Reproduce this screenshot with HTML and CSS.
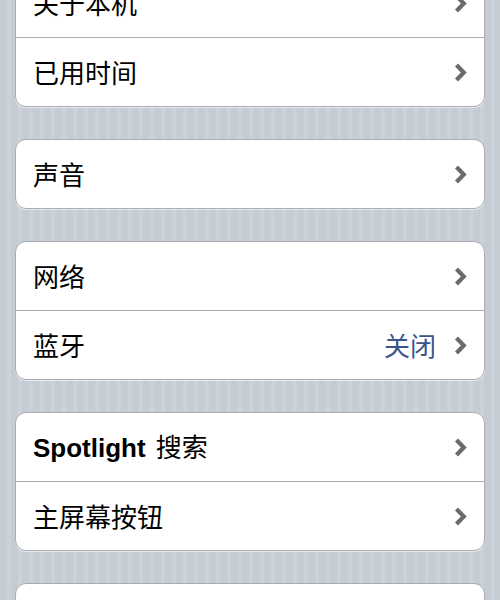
FILE: index.html
```html
<!DOCTYPE html>
<html lang="zh-CN">
<head>
<meta charset="utf-8">
<title>通用</title>
<link rel="stylesheet" href="styles.css">
</head>
<body>
<div class="table">
  <div class="group first">
    <div class="row"><span class="label">关于本机</span><span class="accessory"><svg class="chev" width="13" height="19" viewBox="0 0 13 19"><polyline points="2.5,2 9.8,9.5 2.5,17" /></svg></span></div>
    <div class="row"><span class="label">已用时间</span><span class="accessory"><svg class="chev" width="13" height="19" viewBox="0 0 13 19"><polyline points="2.5,2 9.8,9.5 2.5,17" /></svg></span></div>
  </div>
  <div class="group">
    <div class="row"><span class="label">声音</span><span class="accessory"><svg class="chev" width="13" height="19" viewBox="0 0 13 19"><polyline points="2.5,2 9.8,9.5 2.5,17" /></svg></span></div>
  </div>
  <div class="group">
    <div class="row"><span class="label">网络</span><span class="accessory"><svg class="chev" width="13" height="19" viewBox="0 0 13 19"><polyline points="2.5,2 9.8,9.5 2.5,17" /></svg></span></div>
    <div class="row"><span class="label">蓝牙</span><span class="accessory"><span class="detail">关闭</span><svg class="chev" width="13" height="19" viewBox="0 0 13 19"><polyline points="2.5,2 9.8,9.5 2.5,17" /></svg></span></div>
  </div>
  <div class="group">
    <div class="row"><span class="label"><b class="latin">Spotlight</b><span class="gap">搜索</span></span><span class="accessory"><svg class="chev" width="13" height="19" viewBox="0 0 13 19"><polyline points="2.5,2 9.8,9.5 2.5,17" /></svg></span></div>
    <div class="row"><span class="label">主屏幕按钮</span><span class="accessory"><svg class="chev" width="13" height="19" viewBox="0 0 13 19"><polyline points="2.5,2 9.8,9.5 2.5,17" /></svg></span></div>
  </div>
  <div class="group">
    <div class="row"><span class="label"></span><span class="accessory"></span></div>
  </div>
</div>
</body>
</html>
```

FILE: styles.css
```css
html, body {
  margin: 0;
  padding: 0;
}
body {
  width: 500px;
  height: 600px;
  overflow: hidden;
  background-color: #c5ccd4;
  background-image: repeating-linear-gradient(90deg, #c5ccd4 0px, #c5ccd4 7px, #cbd2d9 7px, #cbd2d9 11px);
  font-family: "Noto Sans CJK SC", "Liberation Sans", sans-serif;
}
.table {
  display: flex;
  flex-direction: column;
  gap: 32px;
  padding: 0 15px;
}
.group {
  background: #fff;
  border: 1px solid #a9acb0;
  border-radius: 11px;
  overflow: hidden;
  box-shadow: 0 1px 0 rgba(255, 255, 255, 0.55);
}
.group.first {
  margin-top: -32px;
}
.row {
  height: 68px;
  display: flex;
  align-items: center;
  justify-content: space-between;
  padding: 0 17px 0 17px;
}
.row + .row {
  border-top: 1px solid #adadad;
}
.label {
  font-size: 26px;
  font-weight: 400;
  color: #000;
  line-height: 1;
  white-space: nowrap;
}
.latin {
  font-family: "Liberation Sans", sans-serif;
  font-weight: bold;
  font-size: 26px;
}
.gap {
  margin-left: 10px;
}
.accessory {
  display: flex;
  align-items: center;
  gap: 18px;
}
.detail {
  font-size: 26px;
  font-weight: 400;
  color: #3d5488;
  line-height: 1;
}
.chev polyline {
  fill: none;
  stroke: #6b6b6b;
  stroke-width: 4.2;
  stroke-linecap: butt;
  stroke-linejoin: miter;
}
```
